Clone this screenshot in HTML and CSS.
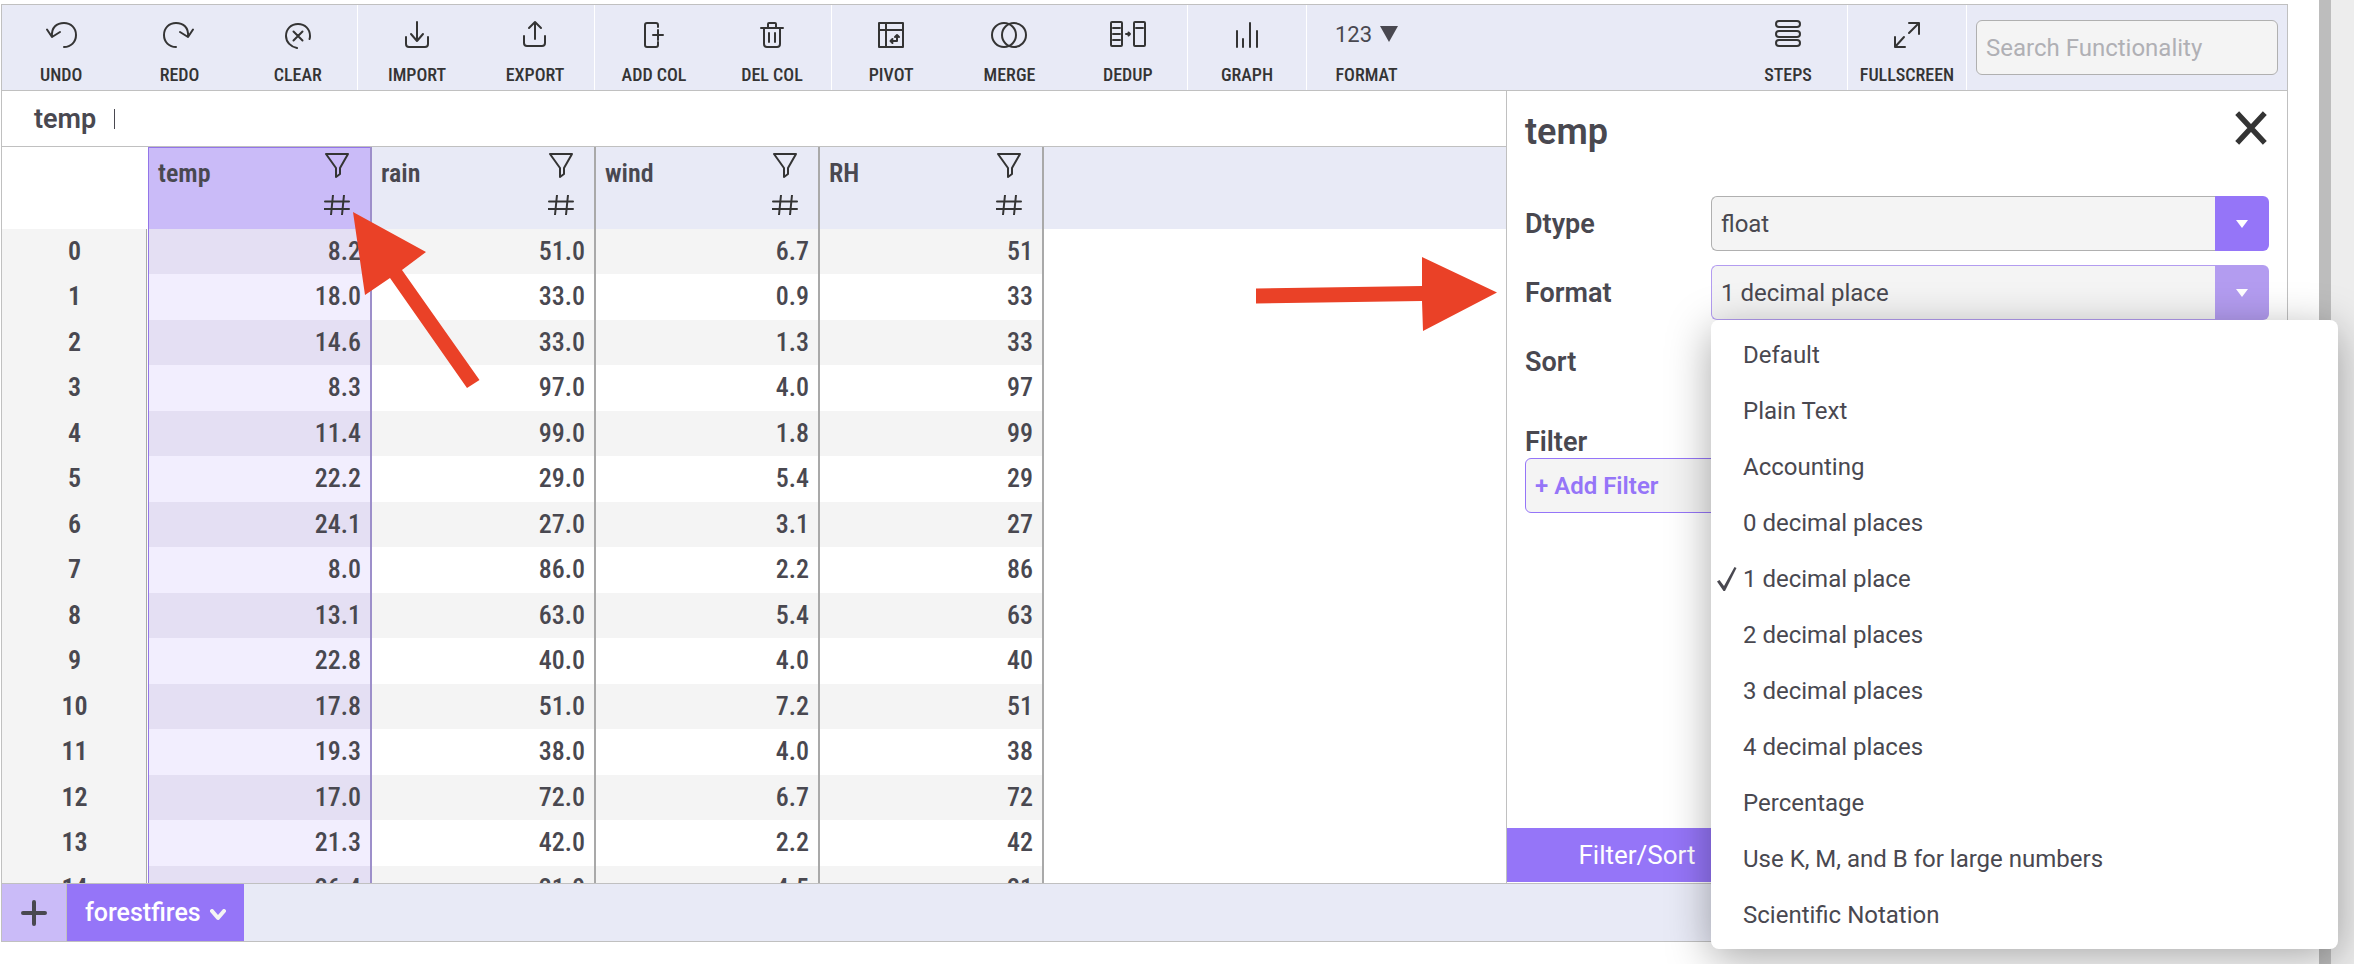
FILE: index.html
```html
<!DOCTYPE html>
<html lang="en">
<head>
<meta charset="utf-8">
<title>Spreadsheet</title>
<link rel="stylesheet" href="styles.css">
</head>
<body>
<div class="page">
<main class="app">
  <header class="toolbar">
    <div class="group triple">
      <button class="tool"><svg viewBox="0 0 36 32"><path d="M4 11.500 9 19l8-5M9 19C8 9 14 5 21 5c7 0 12 5 12 12s-5 12-12 12"/></svg>Undo</button>
      <button class="tool"><svg viewBox="0 0 36 32"><path d="M32 11.500 27 19l-8-5M27 19C28 9 22 5 15 5 8 5 3 10 3 17s5 12 12 12"/></svg>Redo</button>
      <button class="tool"><svg viewBox="0 0 36 32"><path d="M17 30C11 29 6 24 6 18 6 11 11 6 18 6s12 5 12 12c0 1 0 2-.5 3M13.500 13.500l9 9M22.500 13.500l-9 9"/></svg>Clear</button>
    </div>
    <div class="group double">
      <button class="tool"><svg viewBox="0 0 36 32"><path d="M18 4v19M12 16l6 7 6-7M7 19v7q0 3 3 3h16q3 0 3-3v-7"/></svg>Import</button>
      <button class="tool"><svg viewBox="0 0 36 32"><path d="M18 21V4M12 10l6-6 6 6M7 18v7q0 3 3 3h15q3 0 3-3v-7"/></svg>Export</button>
    </div>
    <div class="group double">
      <button class="tool"><svg viewBox="0 0 36 32"><path d="M22 9V7q0-2-2-2h-9q-2 0-2 2v20q0 2 2 2h9q2 0 2-2v-3M22 12v10M17 17h10"/></svg>Add Col</button>
      <button class="tool"><svg viewBox="0 0 36 32"><path d="M7 10h22M14 10V6q0-1 1-1h6q1 0 1 1v4M10 10v16q0 3 3 3h10q3 0 3-3V10M15 15v9M21 15v9"/></svg>Del Col</button>
    </div>
    <div class="group triple">
      <button class="tool"><svg viewBox="0 0 36 32"><path d="M6 5h24v24H6zM6 12h24M13 5v24"/><path d="M17.500 23H24v-6M19.500 21l-2 2 2 2M22 19l2-2 2 2"/></svg>Pivot</button>
      <button class="tool"><svg viewBox="0 0 36 32"><circle cx="13" cy="17" r="12"/><circle cx="23" cy="17" r="12"/></svg>Merge</button>
      <button class="tool"><svg viewBox="0 0 36 32"><rect x="1" y="4" width="11" height="24" rx="1"/><path d="M3 10h7M3 16h7M3 22h7M16 16h4M18.500 14.500 20 16l-1.500 1.500"/><rect x="24" y="4" width="11" height="24" rx="1"/><path d="M26 10h7"/></svg>Dedup</button>
    </div>
    <div class="group single"><button class="tool"><svg viewBox="0 0 36 32"><path d="M8 13v16M14 21v8M21 5v24M28 13v16"/></svg>Graph</button></div>
    <div class="group last"><button class="tool"><span class="num">123 <svg class="tri" viewBox="0 0 18 16"><path d="M0 0h18L9 16z"/></svg></span>Format</button></div>
    <div class="right">
      <div class="group single"><button class="tool"><svg viewBox="0 0 36 32"><rect x="6" y="3" width="24" height="6" rx="3"/><rect x="6" y="13" width="24" height="6" rx="3"/><rect x="6" y="22" width="24" height="6" rx="3"/></svg>Steps</button></div>
      <div class="group single"><button class="tool"><svg viewBox="0 0 36 32"><path d="M20 5h10v11M30 5 20 15M6 19v10h10M6 29l9-10"/></svg>Fullscreen</button></div>
      <input class="search" type="text" placeholder="Search Functionality" aria-label="Search Functionality">
    </div>
  </header>
  <div class="work">
    <section class="sheet">
      <div class="formula"><span class="name">temp</span><span class="caret"></span></div>
      <div class="grid">
        <table>
          <thead><tr id="head"><th class="idx"></th></tr></thead>
          <tbody id="rows"></tbody>
        </table>
      </div>
    </section>
    <aside class="panel">
      <div class="panel-head"><h2>temp</h2><button class="close" aria-label="Close"><svg viewBox="0 0 32 32"><path d="M3 2l26 28M29 2L3 30"/></svg></button></div>
      <div class="field"><label for="dtype">Dtype</label>
        <div class="pick"><select id="dtype"><option>float</option></select><span class="arrow"><svg viewBox="0 0 12 8"><path d="M0 0h12L6 8z"/></svg></span></div></div>
      <div class="field"><label for="format">Format</label>
        <div class="pick open"><select id="format"><option>1 decimal place</option></select><span class="arrow"><svg viewBox="0 0 12 8"><path d="M0 0h12L6 8z"/></svg></span>
          <ul class="menu" role="listbox" aria-label="Format">
            <li role="option">Default</li>
            <li role="option">Plain Text</li>
            <li role="option">Accounting</li>
            <li role="option">0 decimal places</li>
            <li role="option" aria-selected="true"><svg class="check" viewBox="0 0 22 26"><path d="M1 15.500 3.500 14 8 20 18.500 1 20.500 2 9 25H7.500z"/></svg>1 decimal place</li>
            <li role="option">2 decimal places</li>
            <li role="option">3 decimal places</li>
            <li role="option">4 decimal places</li>
            <li role="option">Percentage</li>
            <li role="option">Use K, M, and B for large numbers</li>
            <li role="option">Scientific Notation</li>
          </ul>
        </div></div>
      <div class="field"><span class="label">Sort</span></div>
      <div class="filter"><span class="label">Filter</span><button class="add">+ Add Filter</button></div>
      <div class="modes"><button class="mode">Filter/Sort</button></div>
    </aside>
  </div>
  <footer class="tabs">
    <button class="plus" aria-label="Add sheet"><svg viewBox="0 0 26 26"><path d="M13 2v22M2 13h22"/></svg></button>
    <button class="tab">forestfires<svg viewBox="0 0 16 12"><path d="M2 2l6 7 6-7"/></svg></button>
  </footer>
  <svg class="pointers" viewBox="0 0 2285 938" aria-hidden="true">
    <path d="M351 207 424 247 400 265 477.500 375 465 383 388 273 363 290z"/>
    <path d="M1254 283.500 1420 281V252L1495 287.500 1421 326 1420 296 1254 298.500z"/>
  </svg>
</main>
<div class="scroll"></div>
<div class="edge"></div>
</div>
<script src="grid.js"></script>
</body>
</html>
```
FILE: grid.js
```js
const columns = ["temp", "rain", "wind", "RH"];
const data = [
  ["8.2", "51.0", "6.7", "51"], ["18.0", "33.0", "0.9", "33"], ["14.6", "33.0", "1.3", "33"],
  ["8.3", "97.0", "4.0", "97"], ["11.4", "99.0", "1.8", "99"], ["22.2", "29.0", "5.4", "29"],
  ["24.1", "27.0", "3.1", "27"], ["8.0", "86.0", "2.2", "86"], ["13.1", "63.0", "5.4", "63"],
  ["22.8", "40.0", "4.0", "40"], ["17.8", "51.0", "7.2", "51"], ["19.3", "38.0", "4.0", "38"],
  ["17.0", "72.0", "6.7", "72"], ["21.3", "42.0", "2.2", "42"], ["26.4", "21.0", "4.5", "21"]
];
const icons = `<span class="marks">
  <svg viewBox="0 0 26 26"><path d="M2 2h22L16 16v6l-4 3v-9z"/></svg>
  <svg class="hash" viewBox="0 0 26 20"><path d="M1 6.500h24M0 14h25M9 0 7 20M20 0l-2 20"/></svg></span>`;
document.getElementById("head").innerHTML += columns.map((c, i) =>
  `<th class="col${i ? "" : " sel"}"><div class="headcell">${c}${icons}</div></th>`).join("") + `<th class="rest"></th>`;
document.getElementById("rows").innerHTML = data.map((r, n) =>
  `<tr><th class="idx">${n}</th>${r.map((v, i) => `<td class="${i ? "" : "sel"}">${v}</td>`).join("")}<td class="rest"></td></tr>`).join("");
```
FILE: styles.css
```css
* { box-sizing: border-box; }
body { margin: 0; background: #fff; color: #494850; font-family: Roboto, "Liberation Sans", sans-serif; font-size: 24px; overflow: hidden; }
button, input, select { font: inherit; color: inherit; border: 0; background: none; padding: 0; margin: 0; }
svg { display: block; fill: none; stroke: #343434; stroke-width: 2; stroke-linecap: round; stroke-linejoin: round; }
.page { display: flex; height: 100vh; }
.app { position: relative; flex: 1; display: flex; flex-direction: column; margin: 4px 31px 22px 1px; border: 1px solid #c0c0c0; }
.scroll { width: 12px; background: #bdbdbd; }
.edge { width: 23px; background: #ededed; }

.toolbar { display: flex; height: 86px; background: #e8eaf6; border-bottom: 1px solid #c0c0c0; }
.group { display: flex; border-right: 1px solid #fff; }
.triple { width: 356px; }
.double { width: 237px; }
.single, .last { width: 119px; }
.last { border: 0; }
.tool { flex: 1; display: flex; flex-direction: column; align-items: center; padding-top: 13px; gap: 14px; color: #343434; font-family: "Roboto Condensed", Roboto, sans-serif; font-size: 18px; font-weight: 500; line-height: 22px; text-transform: uppercase; }
.tool svg { width: 36px; height: 32px; }
.num { display: flex; align-items: center; gap: 8px; height: 32px; font: 22px Roboto, sans-serif; color: #494850; }
.tool .tri { width: 18px; height: 16px; fill: #494850; stroke: none; }
.right { display: flex; margin-left: auto; padding-right: 9px; }
.search { align-self: center; width: 302px; height: 55px; margin-left: 9px; padding: 0 9px; border: 1px solid #b0b0b0; border-radius: 6px; background: #f4f4f4; }
.search::placeholder { color: #b0b0b5; opacity: 1; }

.work { flex: 1; display: flex; min-height: 0; }
.sheet { flex: 1; min-width: 0; display: flex; flex-direction: column; }
.formula { display: flex; align-items: center; height: 56px; padding-left: 32px; gap: 18px; border-bottom: 1px solid #c0c0c0; font-size: 27px; font-weight: 600; }
.caret { width: 1px; height: 20px; background: #494850; }
.grid { flex: 1; overflow: hidden; }
table { width: 100%; table-layout: fixed; border-collapse: separate; border-spacing: 0; font-family: "Roboto Condensed", Roboto, sans-serif; font-size: 26px; font-weight: 500; }
th, td { padding: 0 0 2px; line-height: 30px; }
td { padding-right: 9px; text-align: right; border-right: 2px solid #a9a9a9; }
th { font-weight: 600; }
.idx { width: 146px; border-right: 1px solid #fff; background: #f4f4f4; box-shadow: inset -1px 0 #a9a9a9; }
thead .idx { background: #fff; box-shadow: none; }
thead th { height: 82px; vertical-align: top; background: #e8eaf6; }
.col { width: 224px; border-right: 2px solid #a9a9a9; }
tbody tr { height: 45px; }
tbody tr:nth-child(even) { height: 46px; }
tbody tr:nth-child(odd) td { background: #f4f4f4; }
tbody tr:nth-child(odd) td.sel { background: #e4dff3; }
tbody tr:nth-child(even) td.sel { background: #f2eefe; }
tbody tr td.rest { background: #fff; border: 0; }
.sel { border-left: 1px solid #9375e8; border-right-color: #9d8fca; }
thead th.sel { background: #cabbf8; box-shadow: inset 0 1px #9375e8; }
.headcell { display: flex; justify-content: space-between; padding: 5px 20px 0 9px; line-height: 42px; text-align: left; }
.marks { display: grid; gap: 17px; align-content: start; }
.marks svg { width: 26px; height: 26px; }
.marks .hash { height: 20px; }

.panel { display: flex; flex-direction: column; width: 781px; padding-left: 18px; border-left: 1px solid #c0c0c0; }
.panel-head { display: flex; justify-content: space-between; height: 105px; padding: 20px 19px 0 0; }
h2 { margin: 0; font-size: 36px; line-height: 42px; font-weight: 600; }
.close { align-self: flex-start; }
.close svg { width: 34px; height: 34px; stroke-width: 5; stroke-linecap: butt; }
.field { display: flex; align-items: center; height: 55px; margin-bottom: 14px; }
.field label, .field .label { width: 186px; }
label, .label { font-size: 27px; line-height: 32px; font-weight: 600; }
.pick { position: relative; display: flex; flex: 1; height: 55px; margin-right: 18px; }
select { flex: 1; appearance: none; padding-left: 9px; border: 1px solid #b0b0b0; border-right: 0; border-radius: 6px 0 0 6px; background: #f4f4f4; }
.arrow { display: grid; place-items: center; width: 54px; border-radius: 0 6px 6px 0; background: #9575f8; }
.arrow svg { width: 12px; height: 8px; fill: #fff; stroke: none; }
.open select { border-color: #b39cf0; }
.open .arrow { background: #b39cf0; }
.menu { position: absolute; z-index: 2; top: 55px; left: 0; width: 627px; margin: 0; padding: 7px 0 6px; list-style: none; background: #fff; border-radius: 8px; box-shadow: 0 10px 44px rgba(0, 0, 0, .34); }
.menu li { position: relative; padding-left: 32px; line-height: 56px; }
.check { position: absolute; left: 5px; top: 15px; width: 22px; height: 26px; fill: #494850; stroke: none; }
.filter { display: flex; flex-direction: column; align-items: flex-start; padding-top: 23px; }
.add { width: 380px; height: 55px; padding-left: 9px; border: 1px solid #9575f8; border-radius: 6px; background: #f4f4f4; color: #9575f8; font-weight: 600; text-align: left; }
.modes { display: flex; margin: auto 0 1px -18px; }
.mode { width: 260px; height: 54px; background: #9575f8; color: #fff; font-size: 26px; }

.tabs { display: flex; height: 58px; background: #e8eaf6; border-top: 1px solid #c0c0c0; }
.plus { display: grid; place-items: center; width: 65px; background: #cabbf8; border-right: 1px solid #c0c0c0; }
.plus svg { width: 26px; height: 26px; stroke: #494850; stroke-width: 4; }
.tab { display: flex; align-items: center; gap: 9px; padding: 0 18px; background: #9575f8; color: #fff; font-size: 25px; font-weight: 500; }
.tab svg { width: 16px; height: 12px; margin-top: 4px; stroke: #f4f4f4; stroke-width: 4; }
.pointers { position: absolute; z-index: 1; left: 0; top: 0; width: 2285px; height: 938px; pointer-events: none; fill: #ea4127; stroke: none; }
```
